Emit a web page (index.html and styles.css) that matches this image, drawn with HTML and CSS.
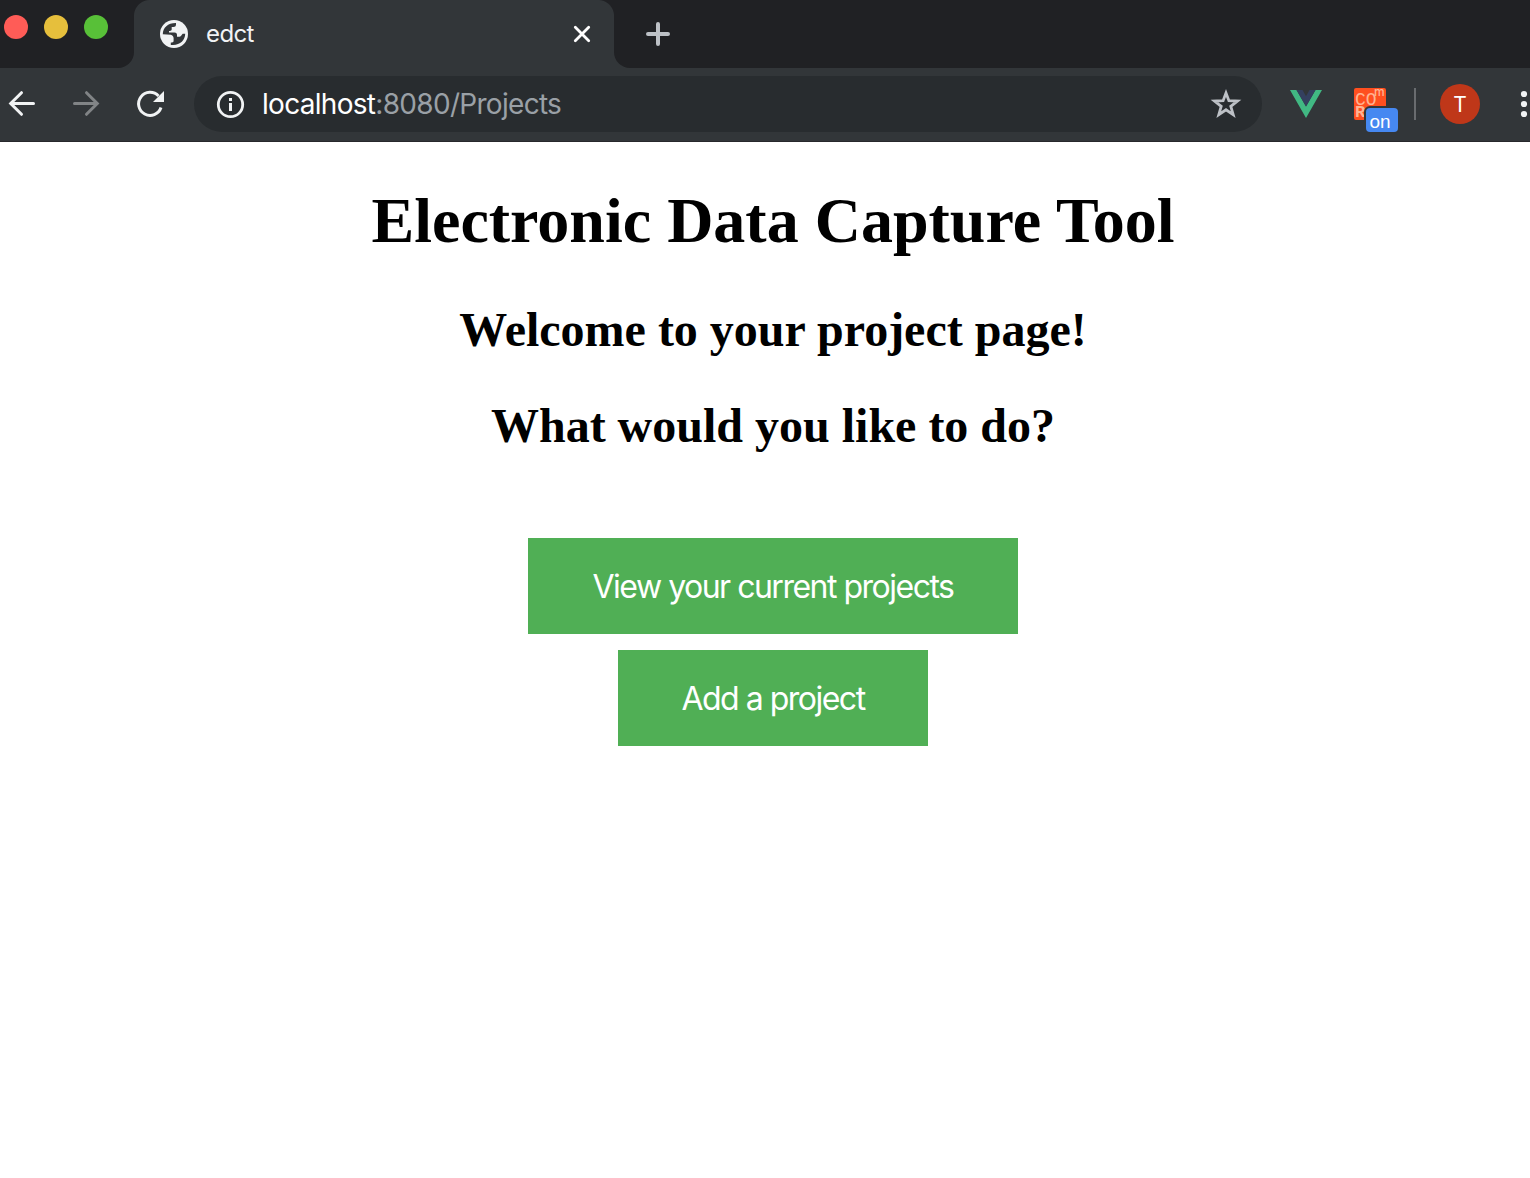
FILE: index.html
```html
<!DOCTYPE html>
<html lang="en">
<head>
<meta charset="utf-8">
<title>edct</title>
<link rel="stylesheet" href="styles.css">
</head>
<body>
<header class="tabstrip">
  <div class="lights"><span class="light red"></span><span class="light yellow"></span><span class="light green"></span></div>
  <div class="tab">
    <svg class="globe" viewBox="0 0 28 28"><circle cx="14" cy="14" r="14" fill="#f1f3f4"/><path d="M2.800 14.200C2.800 7.500 8 2.800 16 2.900V4.500C16 6.200 15 7 13.300 7H11.700V9.300C11.700 10.300 11 11 9.700 11H9V12.500H14.500C16.300 12.500 17 13.500 17 15V16.700H19.500C21.500 16.700 21.700 13.800 23.200 13.800H25.200C25.200 20.500 19.500 26 10.800 24.900V22.400H12C13 22.400 13.600 21.700 13.600 20.700V18.200C13.600 16.300 12.500 15.300 10.800 14.700Z" fill="#323639"/></svg>
    <span class="tab-title">edct</span>
    <svg class="close" viewBox="0 0 16 16"><path d="M1.300 1.300 14.700 14.700M14.700 1.300 1.300 14.700"/></svg>
  </div>
  <svg class="plus" viewBox="0 0 24 24"><path d="M12 2V22M2 12H22"/></svg>
</header>
<nav class="toolbar">
  <svg class="arrow" viewBox="0 0 28 28"><path d="M25.500 13.500H3M13.500 2.700 2.700 13.500 13.500 24.300"/></svg>
  <svg class="arrow forward" viewBox="0 0 28 28"><path d="M2.500 13.500H25M14.500 2.700 25.300 13.500 14.500 24.300"/></svg>
  <svg class="reload" viewBox="0 0 28 28"><path class="arc" d="M25 17.500A11.500 11.500 0 1 1 22.500 6"/><path d="M28 1V12H17Z"/></svg>
  <div class="omnibox">
    <svg class="info" viewBox="0 0 28 28"><circle cx="14.500" cy="14.500" r="12.200"/><path d="M13 13H16V21H13ZM13 8H16V11H13Z"/></svg>
    <span class="url"><span class="host">localhost</span>:8080/Projects</span>
    <svg class="star" viewBox="0 0 30 30"><path d="M15 4 17.900 11.700 26.500 12 19.800 17.300 22.200 25.700 15 20.800 7.800 25.700 10.200 17.300 3.500 12 12.100 11.700Z"/></svg>
  </div>
  <svg class="vue" viewBox="0 0 32 28"><path d="M0 0H6.500L16 16.500 25.500 0H32L16 28Z" fill="#41b883"/><path d="M6.500 0H12.500L16 6.200 19.500 0H25.500L16 16.500Z" fill="#34405f"/></svg>
  <div class="cors"><span class="cors-co">CO</span><span class="cors-r">R</span><span class="cors-m">m</span><span class="badge">on</span></div>
  <span class="divider"></span>
  <span class="avatar">T</span>
  <svg class="menu" viewBox="0 0 10 28"><circle cx="5" cy="4" r="3.100"/><circle cx="5" cy="14" r="3.100"/><circle cx="5" cy="24" r="3.100"/></svg>
</nav>
<main class="page">
  <h1>Electronic Data Capture Tool</h1>
  <h2>Welcome to your project page!</h2>
  <h2>What would you like to do?</h2>
  <div class="actions">
    <button class="btn view">View your current projects</button>
    <button class="btn add">Add a project</button>
  </div>
</main>
</body>
</html>
```
FILE: styles.css
```css
* { box-sizing: border-box; }
body { margin: 0; background: #fff; overflow: hidden; font-family: Inter, "Liberation Sans", sans-serif; }
svg { flex: none; display: block; overflow: visible; fill: none; }
.tabstrip { display: flex; height: 68px; background: linear-gradient(90deg, #323639 640px, #202124 640px); }
.lights { display: flex; gap: 16px; padding: 15px 0 0 4px; width: 134px; background: #202124; border-bottom-right-radius: 16px; }
.light { width: 24px; height: 24px; border-radius: 50%; }
.red { background: #ff5c57; }
.yellow { background: #e6bf3c; }
.green { background: #58c038; }
.tab { display: flex; align-items: center; width: 480px; padding: 0 24px 0 26px; background: #323639; position: relative; }
.tab::before, .tab::after { content: ""; position: absolute; top: 0; width: 16px; height: 16px; }
.tab::before { left: 0; background: radial-gradient(circle at 16px 16px, transparent 15.500px, #202124 16.500px); }
.tab::after { right: 0; background: radial-gradient(circle at 0 16px, transparent 15.500px, #202124 16.500px); }
.globe { width: 28px; height: 28px; }
.tab-title { margin-left: 18px; padding-bottom: 2px; flex: 1; font-size: 24px; letter-spacing: -.6px; color: #f1f3f4; }
.close { width: 16px; height: 16px; stroke: #fff; stroke-width: 2.800; stroke-linecap: round; }
.plus { box-sizing: content-box; width: 24px; height: 24px; padding: 22px 860px 22px 32px; background: #202124; border-bottom-left-radius: 16px; stroke: #bdc1c6; stroke-width: 4; stroke-linecap: round; }
.toolbar { display: flex; align-items: center; height: 74px; padding: 0 0 1px 8px; background: #323639; border-bottom: 1px solid #27282b; }
.arrow { width: 28px; height: 28px; stroke: #f1f3f4; stroke-width: 3; stroke-linecap: round; }
.forward { margin-left: 36px; stroke: #818486; }
.reload { width: 28px; height: 28px; margin-left: 36px; fill: #f1f3f4; }
.arc { fill: none; stroke: #f1f3f4; stroke-width: 3; }
.omnibox { display: flex; align-items: center; width: 1068px; height: 56px; margin: 0 28px 0 30px; padding: 0 21px 0 22px; background: #282c2f; border-radius: 28px; }
.info { width: 28px; height: 28px; stroke: #f1f3f4; stroke-width: 2.800; }
.info path { fill: #f1f3f4; stroke: none; }
.url { flex: 1; margin-left: 18px; font-size: 28px; letter-spacing: -.7px; color: #9aa0a6; white-space: nowrap; }
.host { color: #fff; }
.star { width: 30px; height: 30px; stroke: #bdc1c6; stroke-width: 2.800; }
.vue { width: 32px; height: 28px; }
.cors { position: relative; width: 32px; height: 32px; margin-left: 32px; background: #ff4f1f; border-radius: 2px; color: #ffb392; font-family: "Liberation Mono", monospace; }
.cors span { position: absolute; }
.cors .cors-co { left: 1px; top: 7px; width: 22px; height: 11px; font-size: 18px; line-height: 11px; }
.cors .cors-r { left: 1px; top: 19px; width: 11px; height: 11px; font: bold 17px/11px "Liberation Mono", monospace; }
.cors .cors-m { left: 20px; top: 0; height: 7px; font: 500 12px/7px Inter, sans-serif; }
.cors .badge { left: 12px; top: 20px; width: 32px; height: 24px; border-radius: 4px; background: #4688f1; box-shadow: 0 0 0 2px #323639; color: #fff; font: 19px/27px "Liberation Sans", Arial, sans-serif; text-align: center; padding-right: 4px; }
.divider { width: 2px; height: 32px; margin-left: 28px; background: #696c6f; }
.avatar { width: 40px; height: 40px; flex: none; margin-left: 24px; border-radius: 50%; background: #bf3719; color: #fff; font-size: 21px; line-height: 41px; text-align: center; }
.menu { width: 10px; height: 28px; margin-left: 39px; fill: #f1f3f4; }
.page { padding: 42px 0 0 16px; text-align: center; color: #000; }
h1, h2 { margin: 0; font-family: "Liberation Serif", "Times New Roman", serif; font-weight: 700; }
h1 { font-size: 64px; line-height: 74px; margin-bottom: 44px; }
h2 { font-size: 48px; line-height: 56px; margin-bottom: 40px; }
.actions { display: flex; flex-direction: column; align-items: center; gap: 16px; padding-top: 44px; }
.btn { height: 96px; padding: 1px 0 0; border: 0; background: #50af55; color: #fff; font: 32px Inter, sans-serif; letter-spacing: -1.5px; white-space: nowrap; }
.view { width: 490px; }
.add { width: 310px; }
```
